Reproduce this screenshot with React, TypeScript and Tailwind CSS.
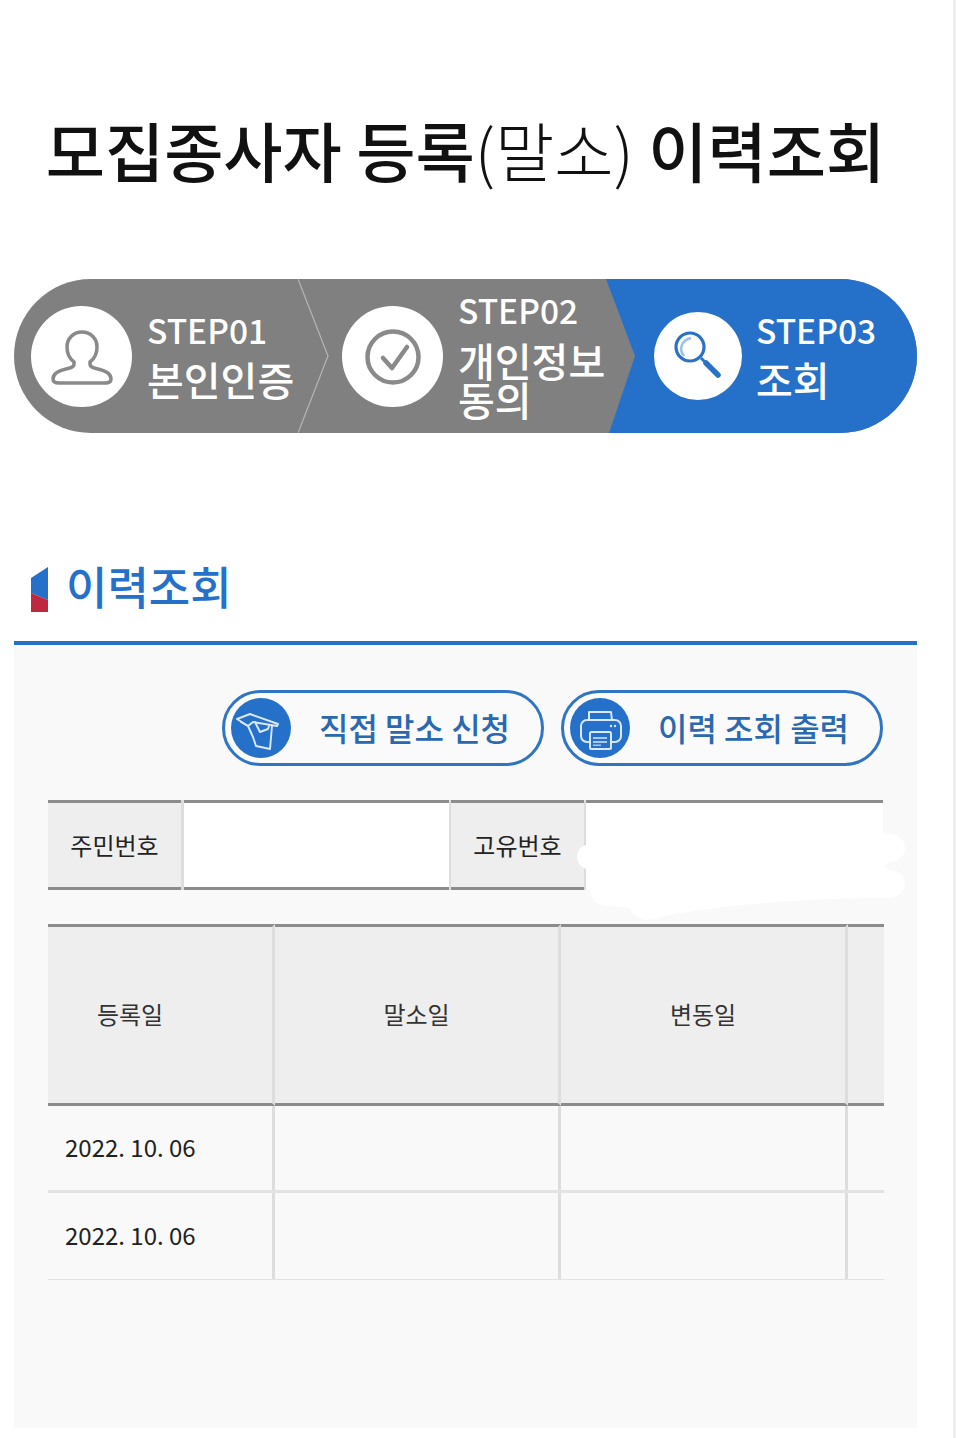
const KR = 'font-["Noto_Sans_CJK_KR","Noto_Sans",sans-serif]';

function UserIcon() {
  return (
    <svg viewBox="0 0 101 101" className="w-[101px] h-[101px] shrink-0 rounded-full bg-white">
      <path d="M51 26c-9 0-15 7-15 15 0 7 3 12 7 15v2c0 3-3 4-8 5-9 2-13 6-13 10 0 3 2 4 6 4h46c4 0 6-1 6-4 0-4-4-8-13-10-5-1-8-2-8-5v-2c4-3 7-8 7-15 0-8-6-15-15-15z" fill="none" stroke="#8a8a8a" strokeWidth="3.5" />
    </svg>
  );
}

function CheckIcon() {
  return (
    <svg viewBox="0 0 101 101" className="w-[101px] h-[101px] shrink-0 rounded-full bg-white">
      <circle cx="51" cy="51" r="25.5" fill="none" stroke="#8a8a8a" strokeWidth="4.5" />
      <path d="M41 52l9 10 15-21" fill="none" stroke="#8a8a8a" strokeWidth="4.5" strokeLinecap="round" strokeLinejoin="round" />
    </svg>
  );
}

function SearchIcon() {
  return (
    <svg viewBox="0 0 88 88" className="w-[88px] h-[88px] shrink-0 rounded-full bg-white">
      <circle cx="36" cy="35" r="14" fill="none" stroke="#2a72c4" strokeWidth="3.2" />
      <path d="M30 44c-6-7-2-16 7-18" fill="none" stroke="#9cc2ec" strokeWidth="2.6" />
      <path d="M47 46l5 5" fill="none" stroke="#2a72c4" strokeWidth="3" />
      <path d="M52 51l12 12" fill="none" stroke="#2a72c4" strokeWidth="5.5" strokeLinecap="round" />
    </svg>
  );
}

function HandIcon() {
  return (
    <svg viewBox="0 0 60 60" className="w-[60px] h-[60px] shrink-0 rounded-full bg-[#2571c9]">
      <g fill="none" stroke="#dbe8f8" strokeWidth="1.9" strokeLinejoin="round" strokeLinecap="round">
        <path d="M6 21l13-5 28 10-1 2-24-4-5 4z" />
        <path d="M10 24l7 4 5 11 3 9 14 3 2-23" />
        <path d="M24 24l5 10 8-3 1-3" />
      </g>
    </svg>
  );
}

function PrinterIcon() {
  return (
    <svg viewBox="0 0 60 60" className="w-[60px] h-[60px] shrink-0 rounded-full bg-[#2571c9]">
      <g fill="none" stroke="#dbe8f8" strokeWidth="2" strokeLinejoin="round">
        <path d="M19 22v-8h22l1 8" />
        <rect x="11" y="22" width="40" height="22" rx="6" />
        <rect x="20" y="34" width="21" height="17" rx="1.5" fill="#2571c9" />
      </g>
      <rect x="23" y="39" width="14" height="2" fill="#a9c8ec" />
      <rect x="23" y="43" width="14" height="2" fill="#a9c8ec" />
      <rect x="23" y="46.5" width="8" height="1.5" fill="#a9c8ec" />
      <circle cx="41" cy="28" r="1.2" fill="#dbe8f8" />
      <circle cx="45" cy="28" r="1.2" fill="#dbe8f8" />
    </svg>
  );
}

function StepBar() {
  return (
    <div className="relative flex h-[154px] rounded-full overflow-hidden bg-[#808080] text-white font-medium">
      <div className="w-[284px] pl-[17px] flex items-center">
        <UserIcon />
        <div className="ml-[15px] -mt-[4px]">
          <div className="text-[33.5px] leading-[50px]">STEP01</div>
          <div className="text-[40px] leading-[49px] whitespace-nowrap">본인인증</div>
        </div>
      </div>
      <div className="w-[308px] pl-[44px] flex items-center">
        <CheckIcon />
        <div className="ml-[15px] -mt-[9px] w-[150px]">
          <div className="mb-[6px] text-[33.5px] leading-[50px]">STEP02</div>
          <div className="text-[40px] leading-[39px]">개인정보 동의</div>
        </div>
      </div>
      <div className="flex-1 pl-[48px] flex items-center bg-[#2571c9] [clip-path:polygon(0_0,100%_0,100%_100%,3px_100%,29px_50%)]">
        <SearchIcon />
        <div className="ml-[14px] -mt-[4px]">
          <div className="text-[33.5px] leading-[50px]">STEP03</div>
          <div className="text-[40px] leading-[49px]">조회</div>
        </div>
      </div>
      <svg viewBox="0 0 40 154" className="absolute left-[284px] top-0 w-[40px] h-[154px]">
        <path d="M0 0l30 77L0 154" fill="none" stroke="#b4b4b4" strokeWidth="1.2" />
      </svg>
    </div>
  );
}

function ActionButton({ icon, label }: { icon: React.ReactNode; label: string }) {
  return (
    <button className="w-[322px] h-[76px] pl-[6px] flex items-center rounded-full border-[3px] border-[#2f75c4] bg-[#fafafa]">
      {icon}
      <span className="ml-[28px] -mt-[3px] text-[32px] font-medium leading-none text-[#2a68b0] whitespace-nowrap">{label}</span>
    </button>
  );
}

function InfoTable() {
  const th = 'flex items-center justify-center bg-[#eeeeee] border-y-[3px] border-[#8c8c8c] text-[24px] text-[#222222]';
  return (
    <div className="mt-[34px] grid grid-cols-[133px_3px_265px_2px_133px_2px_1fr] h-[90px]">
      <div className={th}>주민번호</div>
      <div className="bg-[#dddddd]" />
      <div className="bg-white border-y-[3px] border-[#8c8c8c]" />
      <div className="bg-[#dddddd]" />
      <div className={th}>고유번호</div>
      <div className="bg-[#dddddd]" />
      <div className="bg-white border-t-[3px] border-[#8c8c8c]" />
    </div>
  );
}

function HistoryTable() {
  const head = 'flex items-center justify-center pb-[2px] bg-[#eeeeee] border-y-[3px] border-y-[#8c8c8c] text-[24px] text-[#333333]';
  const cell = 'border-r-[3px] border-r-[#dddddd]';
  const rows = [
    { date: '2022. 10. 06', h: 'h-[87px] border-b-[3px] border-b-[#e3e3e3]' },
    { date: '2022. 10. 06', h: 'h-[87px] border-b border-b-[#e3e3e3]' },
  ];
  return (
    <div className="mt-[34px] w-[836px]">
      <div className="grid grid-cols-[227px_286px_287px_36px] h-[182px]">
        <div className={`${head} ${cell} !justify-start pl-[17px]`}>
          <span className="w-[130px] text-center">등록일</span>
        </div>
        <div className={`${head} ${cell}`}>말소일</div>
        <div className={`${head} ${cell}`}>변동일</div>
        <div className={head} />
      </div>
      {rows.map((r, i) => (
        <div key={i} className={`grid grid-cols-[227px_286px_287px_36px] ${r.h}`}>
          <div className={`${cell} flex items-center pl-[17px] pb-[3px] text-[24px] text-[#222222]`}>{r.date}</div>
          <div className={cell} />
          <div className={cell} />
          <div />
        </div>
      ))}
    </div>
  );
}

export default function App() {
  return (
    <div className={`flex w-full h-[1438px] overflow-hidden bg-white ${KR}`}>
      <main className="w-[953px] pl-[14px] pr-[36px]">
        <h1 className="mt-[104px] h-[90px] flex items-center justify-center text-[64.4px] font-medium text-[#111111] whitespace-nowrap">
          모집종사자 등록<span className="font-light">(말소)</span>&nbsp;이력조회
        </h1>

        <div className="mt-[85px]">
          <StepBar />
        </div>

        <div className="mt-[123px] h-[85px] pl-[17px] flex items-start">
          <svg viewBox="0 0 17 45" className="w-[17px] h-[45px] mt-[11px] shrink-0">
            <path d="M0 11L17 0v33L0 26z" fill="#2571c9" />
            <path d="M0 26l17 7v12H0z" fill="#c0283f" />
          </svg>
          <h2 className="ml-[18px] text-[45px] leading-[60px] font-medium text-[#2571c9]">이력조회</h2>
        </div>

        <section className="relative h-[787px] px-[34px] pt-[45px] border-t-4 border-[#2571c9] bg-[#f9f9f9]">
          <div className="flex justify-end gap-[17px]">
            <ActionButton icon={<HandIcon />} label="직접 말소 신청" />
            <ActionButton icon={<PrinterIcon />} label="이력 조회 출력" />
          </div>
          <InfoTable />
          <HistoryTable />
          {/* redacted value, painted over in the capture */}
          <svg viewBox="570 825 340 100" className="absolute left-[556px] top-[180px] w-[340px] h-[100px]">
            <path d="M586 845C575 848 573 864 586 869L590 888C590 901 600 908 612 906L630 908C636 922 650 922 665 916C720 905 800 898 890 898C910 896 910 870 890 870L883 866L890 862C910 862 910 834 890 834L883 832L590 832z" fill="#ffffff" />
          </svg>
        </section>
      </main>
      <aside className="w-[3px] h-full bg-[#eeeeee]" />
    </div>
  );
}
